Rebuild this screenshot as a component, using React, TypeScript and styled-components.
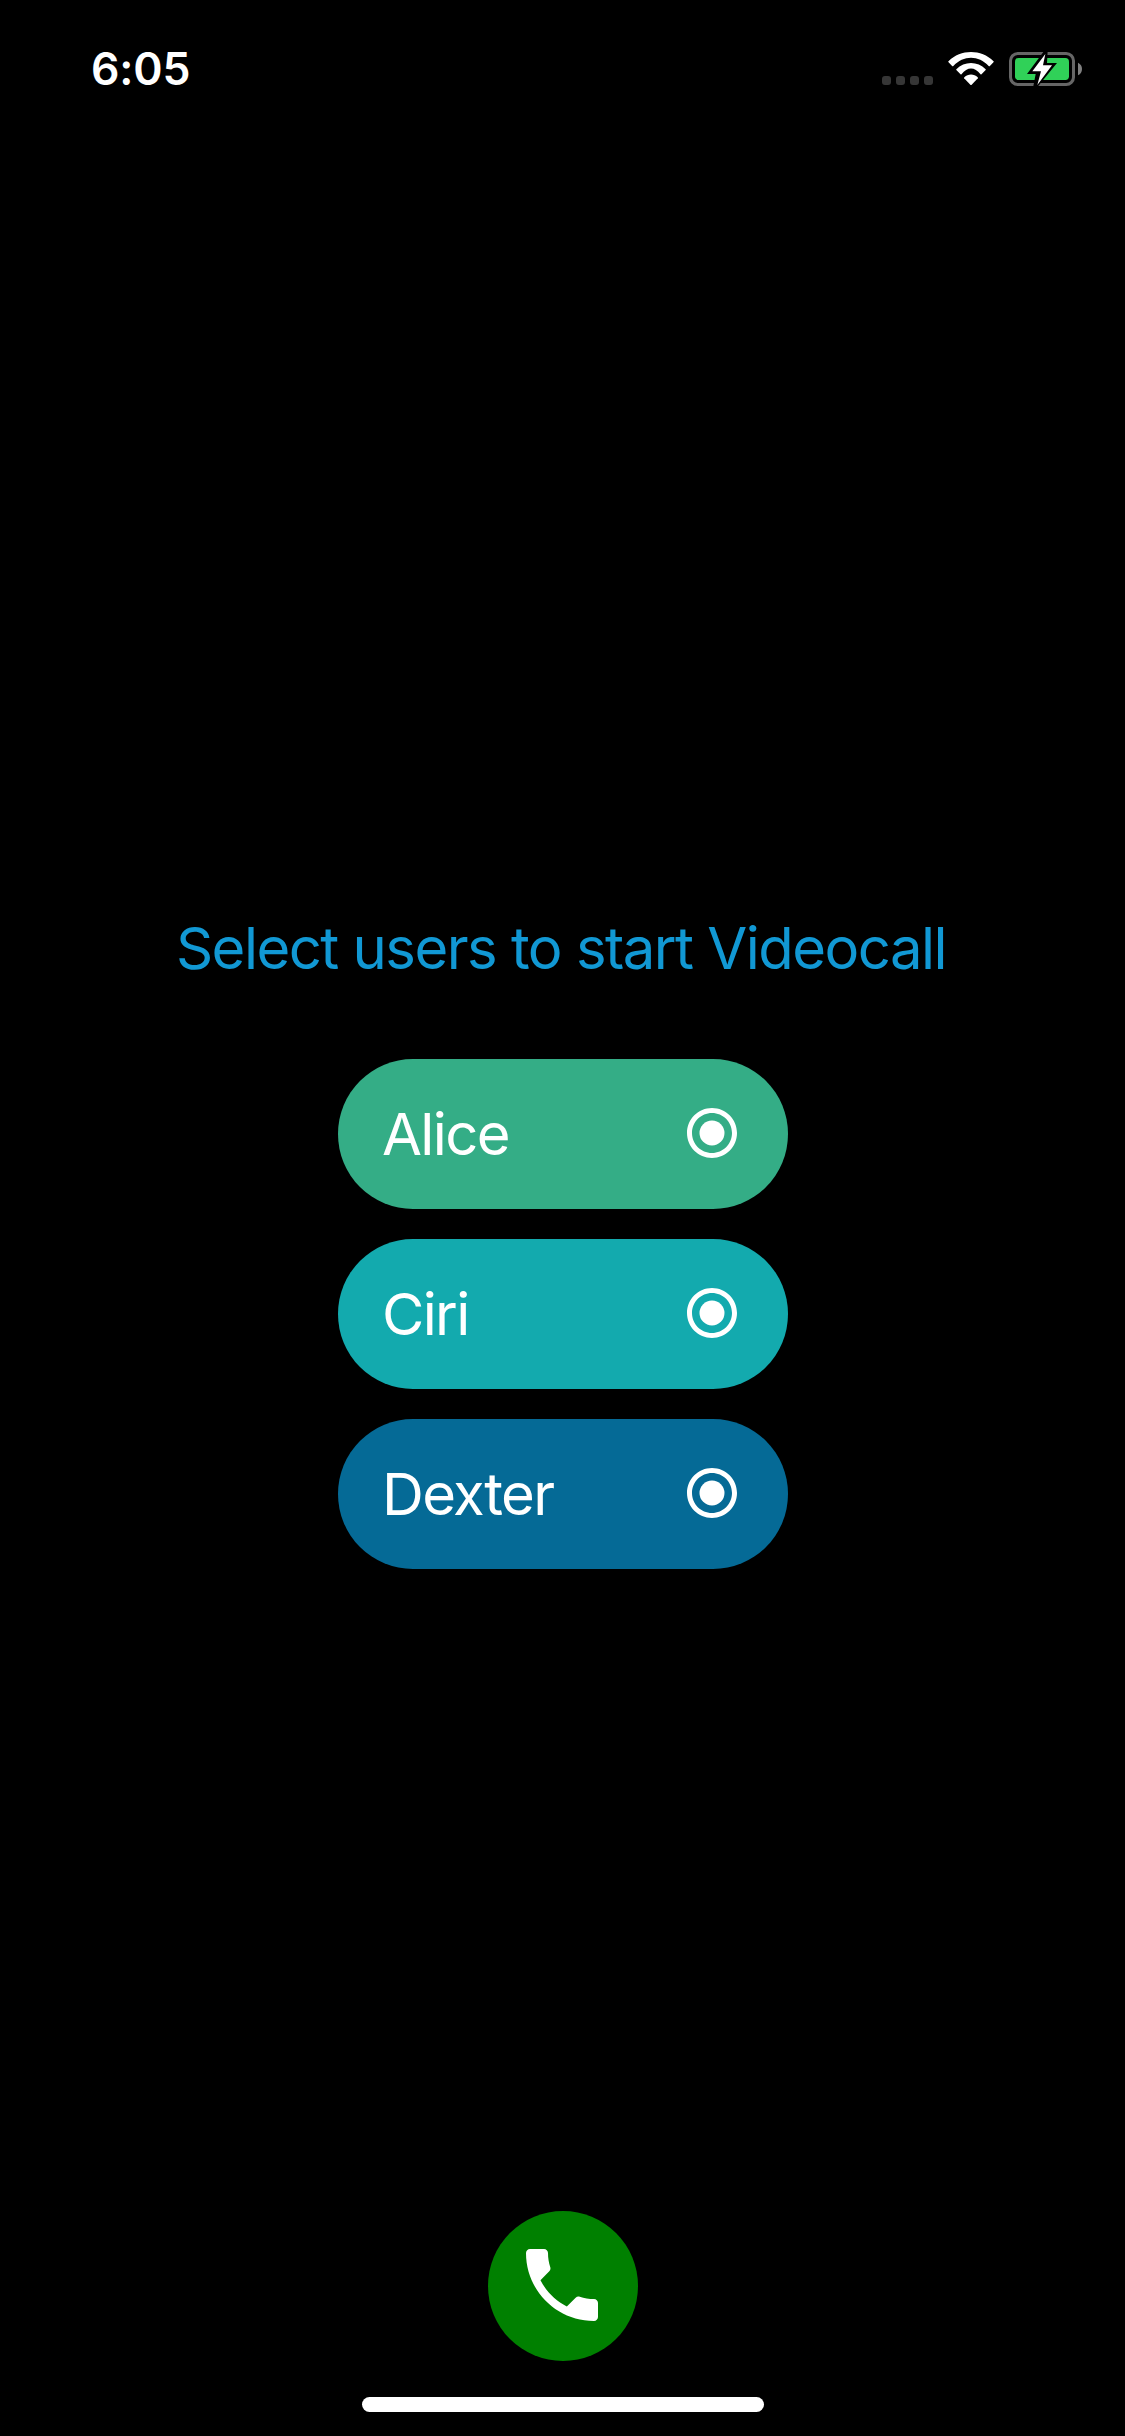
import React from "react";
import styled, { createGlobalStyle } from "styled-components";

const GlobalStyle = createGlobalStyle`
  *, *::before, *::after { box-sizing: border-box; }
  body { margin: 0; background: #000; }
`;

const Screen = styled.div`
  width: 1125px;
  height: 2436px;
  display: flex;
  flex-direction: column;
  background: #000;
  color: #fff;
  font-family: Inter, "Liberation Sans", sans-serif;
  overflow: hidden;
`;

const StatusBar = styled.header`
  height: 132px;
  display: flex;
  justify-content: space-between;
  align-items: flex-start;
  padding: 40px 43px 0 91px;
`;

const Time = styled.time`
  font-size: 44.5px;
  font-weight: 560;
  line-height: 58px;
  letter-spacing: -0.2px;
`;

const Indicators = styled.div`
  display: flex;
  align-items: flex-start;
  padding-top: 12px;
`;

const SignalDots = styled.div`
  display: flex;
  gap: 5px;
  margin: 24px 15px 0 0;
`;

const SignalDot = styled.span`
  width: 9px;
  height: 9px;
  border-radius: 3px;
  background: #363636;
`;

const WifiIcon = styled.svg`
  width: 46px;
  height: 34px;
  margin-right: 15px;
`;

const BatteryIcon = styled.svg`
  width: 73px;
  height: 34px;
`;

const Main = styled.main`
  flex: 1;
  display: flex;
  flex-direction: column;
  align-items: center;
  padding-top: 780px;
`;

const Heading = styled.h1`
  margin: 0 0 75px;
  padding-right: 3px;
  font-size: 58px;
  font-weight: 400;
  line-height: 72px;
  letter-spacing: -1.52px;
  color: #1198d4;
  white-space: nowrap;
`;

const UserList = styled.div`
  display: flex;
  flex-direction: column;
  gap: 30px;
  padding-left: 1px;
`;

const UserButton = styled.button<{ $color: string }>`
  width: 450px;
  height: 150px;
  display: flex;
  align-items: center;
  justify-content: space-between;
  padding: 0 46px 0 44px;
  border: 0;
  border-radius: 75px;
  background: ${(p) => p.$color};
  color: #fff;
  font-family: inherit;
`;

const UserName = styled.span`
  font-size: 58px;
  line-height: 72px;
  letter-spacing: -1.65px;
`;

const RadioIcon = styled.svg`
  width: 60px;
  height: 60px;
  margin-bottom: 2px;
`;

const Footer = styled.footer`
  display: flex;
  flex-direction: column;
  align-items: center;
  gap: 36px;
  padding: 0 0 24px 1px;
`;

const CallButton = styled.button`
  width: 150px;
  height: 150px;
  display: flex;
  align-items: center;
  justify-content: center;
  padding: 0 2px 2px 0;
  border: 0;
  border-radius: 50%;
  background: #008000;
`;

const CallIcon = styled.svg`
  width: 96px;
  height: 96px;
`;

const HomeIndicator = styled.div`
  width: 402px;
  height: 15px;
  border-radius: 8px;
  background: #fff;
`;

const users = [
  { name: "Alice", color: "#34ad86" },
  { name: "Ciri", color: "#13aaae" },
  { name: "Dexter", color: "#056a96" },
];

export default function App() {
  return (
    <Screen>
      <GlobalStyle />
      <StatusBar>
        <Time>6:05</Time>
        <Indicators>
          <SignalDots>
            {[0, 1, 2, 3].map((i) => (
              <SignalDot key={i} />
            ))}
          </SignalDots>
          <WifiIcon viewBox="0 0 138 102" fill="#fff">
            <path d="M1 30 Q0 29 1.500 27.500 C38 -9 100 -9 136.500 27.500 Q138 29 137 30 L125 42.500 Q123.500 43.500 122 42 C92 9 46 9 16 42 Q14.500 43.500 13 42.500 Z" />
            <path d="M25 54 Q24 53 25 51.500 C49 27 89 27 113 51.500 Q114 53 113 54 L100.500 67 Q99 68 97.500 66.500 C80 44 58 44 40.500 66.500 Q39 68 37.500 67 Z" />
            <path d="M48.500 78.500 Q47.500 77 49 75.500 C60 65 78 65 89 75.500 Q90.500 77 89.500 78.500 L71 98 Q69 100 67 98 Z" />
          </WifiIcon>
          <BatteryIcon viewBox="0 0 219 102">
            <rect x="4.500" y="4.500" width="189" height="93" rx="22" fill="none" stroke="#666" strokeWidth="9" />
            <path d="M207 32 Q219 38 219 51 Q219 64 207 70 Z" fill="#808080" />
            <rect x="18" y="18" width="162" height="66" rx="11" fill="#30d158" />
            <g transform="translate(-417 0)">
              <path d="M523 -4 L471 66 H497 L489 108 L503 104 L561 33 H531 L533 -4 Z" fill="#000" />
              <path d="M526 6 L487 58 H513 L502 99 L546 40 H519 Z" fill="#fff" />
            </g>
          </BatteryIcon>
        </Indicators>
      </StatusBar>
      <Main>
        <Heading>Select users to start Videocall</Heading>
        <UserList>
          {users.map((u) => (
            <UserButton key={u.name} $color={u.color}>
              <UserName>{u.name}</UserName>
              <RadioIcon viewBox="0 0 24 24" fill="#fff">
                <circle cx="12" cy="12" r="5" />
                <path d="M12 2C6.480 2 2 6.480 2 12s4.480 10 10 10 10-4.480 10-10S17.520 2 12 2zm0 18c-4.420 0-8-3.580-8-8s3.580-8 8-8 8 3.580 8 8-3.580 8-8 8z" />
              </RadioIcon>
            </UserButton>
          ))}
        </UserList>
      </Main>
      <Footer>
        <CallButton aria-label="Call">
          <CallIcon viewBox="0 0 24 24" fill="#fff">
            <path d="M6.620 10.790c1.440 2.830 3.760 5.140 6.590 6.590l2.200-2.200c.270-.270.670-.360 1.020-.240 1.120.370 2.330.570 3.570.570.550 0 1 .450 1 1V20c0 .550-.450 1-1 1-9.390 0-17-7.610-17-17 0-.550.450-1 1-1h3.500c.550 0 1 .450 1 1 0 1.250.200 2.450.570 3.570.110.350.030.740-.250 1.020l-2.200 2.200z" />
          </CallIcon>
        </CallButton>
        <HomeIndicator />
      </Footer>
    </Screen>
  );
}
